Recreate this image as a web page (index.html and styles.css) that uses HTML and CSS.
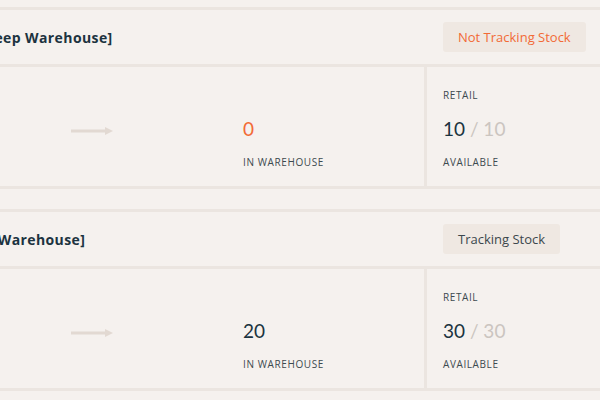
FILE: index.html
```html
<!DOCTYPE html>
<html lang="en">
<head>
<meta charset="UTF-8">
<meta name="viewport" content="width=device-width, initial-scale=1.0">
<title>Stock Locations</title>

<link rel="stylesheet" href="styles.css">
</head>
<body>

<div class="page">

  <!-- First location -->
  <section class="card">
    <div class="card-head">
      <h2 class="card-title">Bleep Online [Bleep Warehouse]</h2>
      <div class="badge-cell">
        <span class="badge badge-off">Not Tracking Stock</span>
      </div>
    </div>
    <div class="card-body">
      <div class="stat">
        <div class="stat-title">Source</div>
        <div class="stat-num">10</div>
        <div class="stat-label">Total</div>
      </div>
      <div class="arrow-cell">
        <svg class="arrow" width="42" height="10" viewBox="0 0 42 10">
          <rect x="0" y="3.5" width="35" height="3" fill="#e2d9d2"/>
          <path d="M34 1 L42 5 L34 9 Z" fill="#e2d9d2"/>
        </svg>
      </div>
      <div class="stat">
        <div class="stat-num num-warn">0</div>
        <div class="stat-label">In Warehouse</div>
      </div>
      <div class="stat stat-retail">
        <div class="stat-title">Retail</div>
        <div class="stat-num">10 <span class="num-of">/ 10</span></div>
        <div class="stat-label">Available</div>
      </div>
    </div>
  </section>

  <!-- Second location -->
  <section class="card">
    <div class="card-head">
      <h2 class="card-title">Bleep Lab [Shop Warehouse]</h2>
      <div class="badge-cell">
        <span class="badge">Tracking Stock</span>
      </div>
    </div>
    <div class="card-body">
      <div class="stat">
        <div class="stat-title">Source</div>
        <div class="stat-num">50</div>
        <div class="stat-label">Total</div>
      </div>
      <div class="arrow-cell">
        <svg class="arrow" width="42" height="10" viewBox="0 0 42 10">
          <rect x="0" y="3.5" width="35" height="3" fill="#e2d9d2"/>
          <path d="M34 1 L42 5 L34 9 Z" fill="#e2d9d2"/>
        </svg>
      </div>
      <div class="stat">
        <div class="stat-num">20</div>
        <div class="stat-label">In Warehouse</div>
      </div>
      <div class="stat stat-retail">
        <div class="stat-title">Retail</div>
        <div class="stat-num">30 <span class="num-of">/ 30</span></div>
        <div class="stat-label">Available</div>
      </div>
    </div>
  </section>

</div>

</body>
</html>
```
FILE: styles.css
```css
/* Page */
body {
  margin: 0;
  background-color: #f5f1ee;
  font-family: "Open Sans", sans-serif;
  overflow: hidden;
}

/* The list is wider than the window, scrolled a bit to the right */
.page {
  width: 800px;
  margin-left: -160px;
  padding-top: 7px;
}

/* Location card */
.card {
  border-top: 3px solid #ebe5e0;
  border-bottom: 3px solid #ebe5e0;
  margin-bottom: 20px;
}

.card-head {
  display: grid;
  grid-template-columns: 1fr 216px;
  align-items: center;
  height: 54px;
  border-bottom: 3px solid #ebe5e0;
}

.card-title {
  margin: 0;
  padding-left: 37px;
  font-size: 14px;
  font-weight: 700;
  letter-spacing: 0.4px;
  color: #1c3340;
}

.badge-cell {
  padding-left: 19px;
}

.badge {
  display: inline-block;
  padding: 5px 15px;
  background-color: #efe8e2;
  border-radius: 3px;
  font-size: 13px;
  line-height: 20px;
  color: #3b474d;
}

.badge-off {
  color: #f26a36;
}

/* Stock numbers */
.card-body {
  display: grid;
  grid-template-columns: 231px 156px 197px 1fr;
  height: 119px;
}

.stat {
  display: flex;
  flex-direction: column;
  justify-content: flex-end;
  padding: 21px 16px 17px;
  color: #3d4a4f;
}

.stat-retail {
  border-left: 3px solid #ebe5e0;
}

.stat-title {
  margin-bottom: auto;
  font-size: 10px;
  line-height: 14px;
  letter-spacing: 0.6px;
  text-transform: uppercase;
}

.stat-num {
  font-family: "Lato", sans-serif;
  font-size: 19px;
  line-height: 24px;
  color: #1c3340;
}

.num-warn {
  color: #f26a36;
}

.num-of {
  color: #cbc5c0;
}

.stat-label {
  margin-top: 14px;
  font-size: 10px;
  line-height: 14px;
  letter-spacing: 0.6px;
  text-transform: uppercase;
}

.arrow-cell {
  display: flex;
  align-items: center;
  padding-top: 9px;
}
```
